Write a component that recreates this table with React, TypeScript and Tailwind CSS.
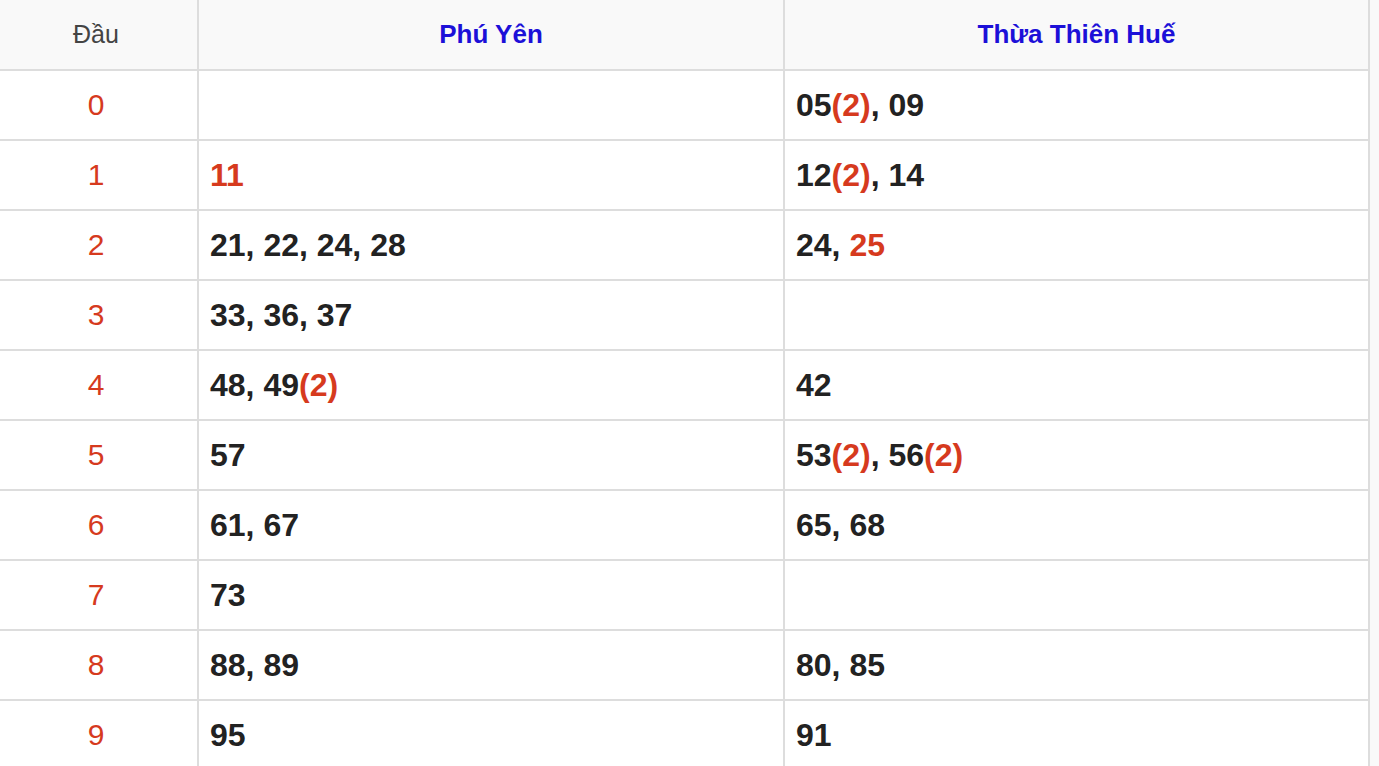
type Part = { t: string; red?: boolean };

const rows: { head: string; phuYen: Part[]; hue: Part[] }[] = [
  { head: '0', phuYen: [], hue: [{ t: '05' }, { t: '(2)', red: true }, { t: ', 09' }] },
  { head: '1', phuYen: [{ t: '11', red: true }], hue: [{ t: '12' }, { t: '(2)', red: true }, { t: ', 14' }] },
  { head: '2', phuYen: [{ t: '21, 22, 24, 28' }], hue: [{ t: '24, ' }, { t: '25', red: true }] },
  { head: '3', phuYen: [{ t: '33, 36, 37' }], hue: [] },
  { head: '4', phuYen: [{ t: '48, 49' }, { t: '(2)', red: true }], hue: [{ t: '42' }] },
  {
    head: '5',
    phuYen: [{ t: '57' }],
    hue: [{ t: '53' }, { t: '(2)', red: true }, { t: ', 56' }, { t: '(2)', red: true }],
  },
  { head: '6', phuYen: [{ t: '61, 67' }], hue: [{ t: '65, 68' }] },
  { head: '7', phuYen: [{ t: '73' }], hue: [] },
  { head: '8', phuYen: [{ t: '88, 89' }], hue: [{ t: '80, 85' }] },
  { head: '9', phuYen: [{ t: '95' }], hue: [{ t: '91' }] },
];

const Cell = ({ parts }: { parts: Part[] }) => (
  <div className="flex items-center pl-[11px] border-r-2 border-b-2 border-[#dddddd] text-[32px] font-bold text-[#222222]">
    {parts.map((p, i) => (
      <span key={i} className={p.red ? 'text-[#d63a1e] whitespace-pre' : 'whitespace-pre'}>
        {p.t}
      </span>
    ))}
  </div>
);

export default function App() {
  return (
    <div
      className="h-[766px] overflow-hidden bg-[#f9f9f9]"
      style={{ fontFamily: '"Liberation Sans", Arial, sans-serif' }}
    >
      <div className="w-[1370px] bg-white">
        <div className="grid grid-cols-[199px_586px_585px] h-[71px] bg-[#f9f9f9]">
          <div className="flex items-center justify-center pr-[5px] border-r-2 border-b-2 border-[#dddddd] text-[25px] text-[#444444]">
            Đầu
          </div>
          <div className="flex items-center justify-center border-r-2 border-b-2 border-[#dddddd] text-[26px] font-bold text-[#1c10d8]">
            Phú Yên
          </div>
          <div className="flex items-center justify-center border-r-2 border-b-2 border-[#dddddd] text-[26px] font-bold text-[#1c10d8]">
            Thừa Thiên Huế
          </div>
        </div>
        {rows.map((r) => (
          <div key={r.head} className="grid grid-cols-[199px_586px_585px] h-[70px]">
            <div className="flex items-center justify-center pr-[5px] pb-[2px] border-r-2 border-b-2 border-[#dddddd] text-[30px] text-[#d63a1e]">
              {r.head}
            </div>
            <Cell parts={r.phuYen} />
            <Cell parts={r.hue} />
          </div>
        ))}
      </div>
    </div>
  );
}
